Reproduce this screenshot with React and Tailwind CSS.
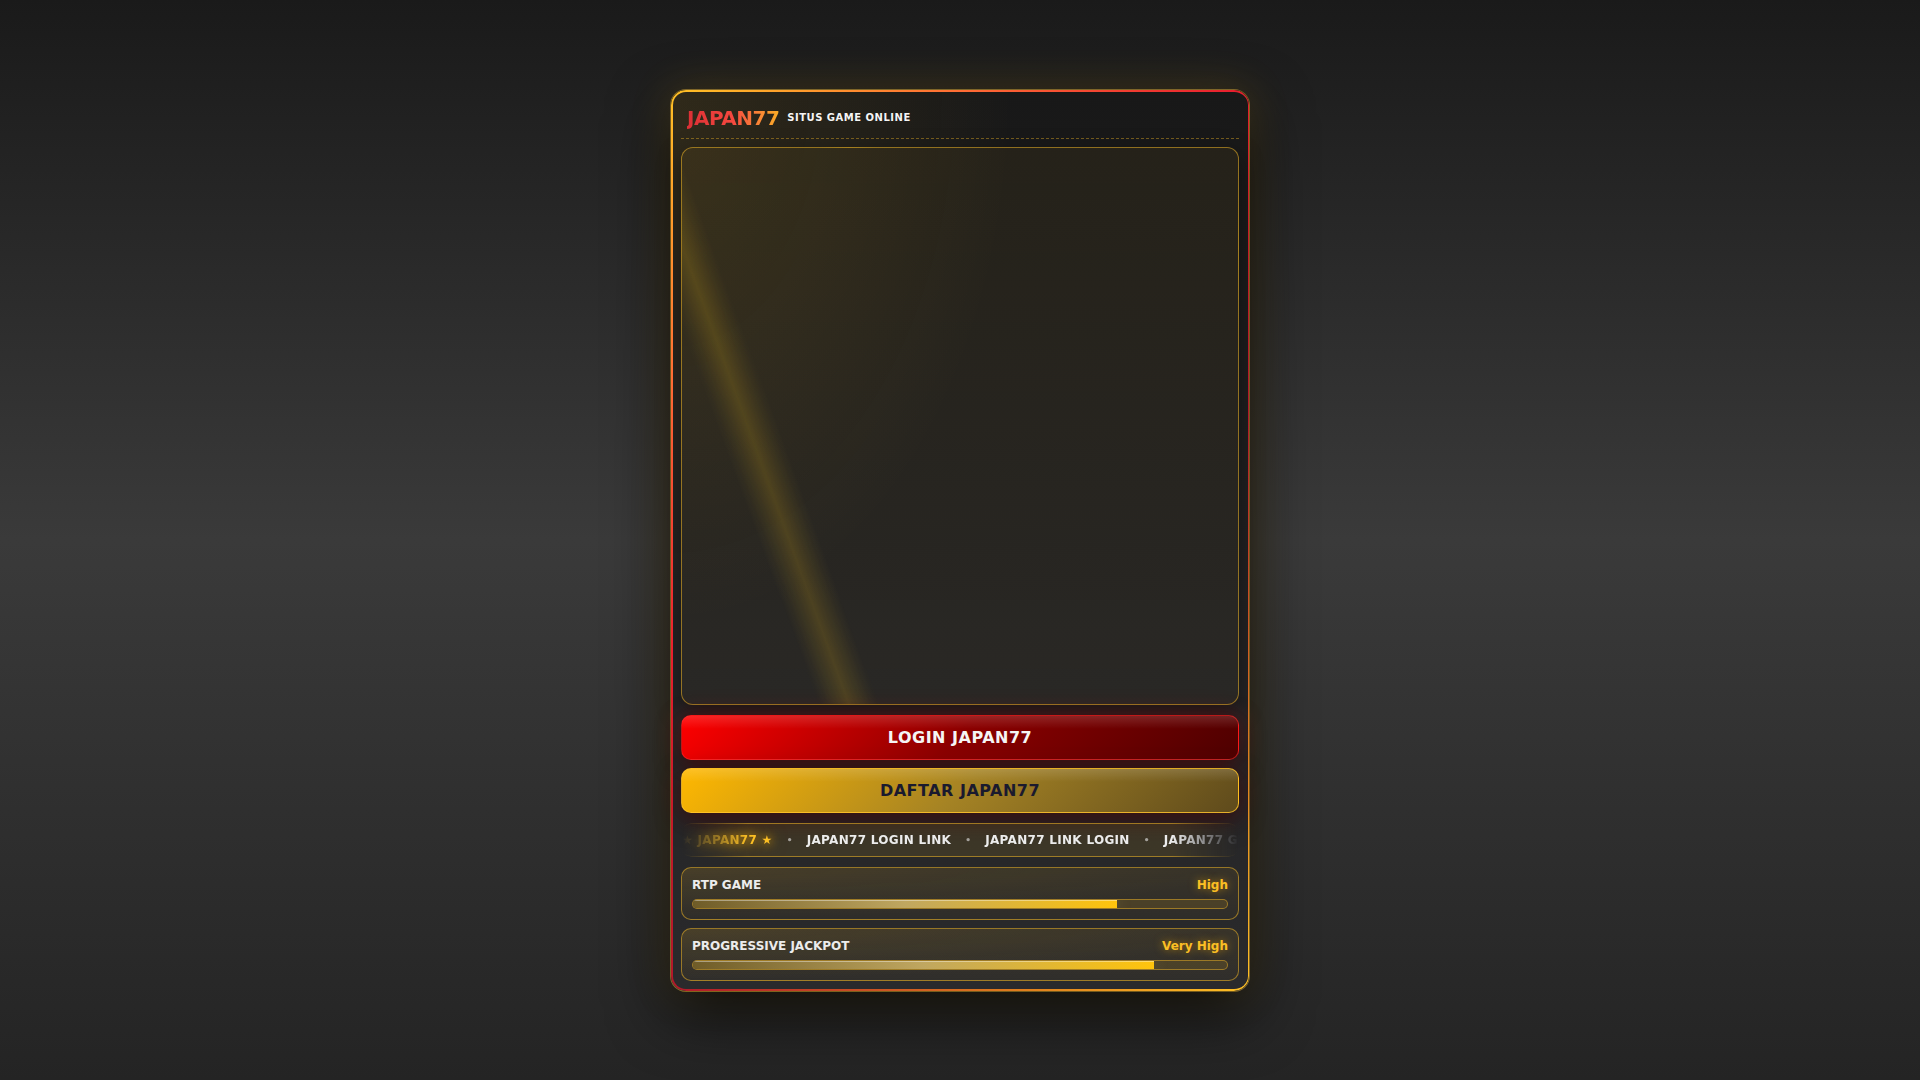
const promos = [
    { id: 1, label: 'JAPAN77 LOGIN LINK' },
    { id: 2, label: 'JAPAN77 LINK LOGIN' },
    { id: 3, label: 'JAPAN77 GAME ONLINE' },
]

const stats = [
    { id: 'rtp', title: 'RTP GAME', level: 'High', value: 79.4 },
    { id: 'jackpot', title: 'PROGRESSIVE JACKPOT', level: 'Very High', value: 86.3 },
]

function Header() {
    return (
        <header className="flex h-[39px] items-center gap-2 border-b border-dashed border-[#ffc125]/40 px-[6px] pb-[2px]">
            <h1 className="bg-linear-to-r from-[#dc2f35] via-[#f5483f] to-[#f9ab24] bg-clip-text text-xl leading-6 font-bold tracking-tight text-transparent">
                JAPAN77
            </h1>
            <p className="text-[10px] leading-4 font-bold tracking-wider text-[#f5f5f5]">SITUS GAME ONLINE</p>
        </header>
    )
}

function Ticker() {
    return (
        <div className="mt-[10px] flex h-[34px] items-center overflow-hidden rounded-[10px] border-y border-[#ffc125]/50 bg-[#ffc125]/10 text-xs font-bold tracking-wide whitespace-nowrap text-[#ececec] [mask-image:linear-gradient(90deg,transparent,#000_12%,#000_88%,transparent)]">
            <div className="flex items-center gap-[14px] pl-px">
                <span className="text-[#fbbf24] [text-shadow:0_0_10px_#ffb300,0_0_18px_#ffb300a6]">★ JAPAN77 ★</span>
                {promos.map((promo) => (
                    <div key={promo.id} className="flex items-center gap-[14px]">
                        <span className="text-[9px] leading-3 opacity-60">•</span>
                        <span>{promo.label}</span>
                    </div>
                ))}
            </div>
        </div>
    )
}

function StatCard({ stat }) {
    return (
        <section className="rounded-[10px] border border-[#ffc125]/50 bg-[radial-gradient(ellipse_at_top_left,#ffc12514,transparent_70%),linear-gradient(180deg,#ffc12514,#ffc12508)] p-[10px]">
            <div className="flex justify-between text-xs leading-[15px] font-bold">
                <h2 className="text-[#ececec]">{stat.title}</h2>
                <span className="text-[#fbbf24] [text-shadow:0_0_8px_#ffb30099]">{stat.level}</span>
            </div>
            <div className="mt-[6px] h-[10px] overflow-hidden rounded-full border border-[#ffc125]/45 bg-[#ffc125]/12">
                <div
                    className="h-full bg-[linear-gradient(90deg,#6f5c28,#c0a760_50%,#ffc40c)] shadow-[0_0_16px_#ffe08040,inset_0_1px_0_#ffffff66]"
                    style={{ width: `${stat.value}%` }}
                />
            </div>
        </section>
    )
}

export default function App() {
    return (
        <div className="flex min-h-screen items-center justify-center bg-[linear-gradient(180deg,#1a1a1a,#3a3a3a_50%,#242424)] font-['DejaVu_Sans',sans-serif]">
            <main className="relative w-full max-w-[580px] rounded-2xl border border-[#ffc125]/40 bg-[radial-gradient(ellipse_at_top_left,#ffc1251a,transparent_42%),linear-gradient(180deg,#181818,#2a2a2c)] p-[10px] shadow-[0_20px_60px_#000000cc,0_0_40px_#ffc12533]">
                {/* Gradient frame */}
                <div className="pointer-events-none absolute inset-0 rounded-[15px] bg-[linear-gradient(135deg,#ffc125,#ff6b35_20%,#e8202e_38%,#c41a28_50%,#b0182a_61%,#e0801d_85%,#ffc125)] p-[2px] pr-px [mask:linear-gradient(#fff_0_0)_content-box_exclude,linear-gradient(#fff_0_0)]" />

                <Header />

                {/* Banner */}
                <div className="mt-2 aspect-square rounded-xl border border-[#ffc125]/50 bg-[linear-gradient(70deg,transparent_18%,#ffc81408_19%,#ffc8142b_22%,#ffc81408_25%,transparent_26%),linear-gradient(180deg,#ffc1250e,#ffc12506)] shadow-[0_8px_24px_#00000066]" />

                <div className="mt-[10px] flex flex-col gap-2">
                    <button className="h-[45px] rounded-[10px] border border-[#ff2a2a]/60 bg-[linear-gradient(180deg,#ffffff24,transparent_13px),linear-gradient(135deg,#ff0000,#8b0000_50%,#4d0000)] pt-px text-base font-bold tracking-[0.5px] text-[#f5f5f5] shadow-[0_0_24px_#ff000040,0_8px_24px_#00000080]">
                        LOGIN JAPAN77
                    </button>
                    <button className="h-[45px] rounded-[10px] border border-[#ffc125]/80 bg-[linear-gradient(180deg,#ffffff24,transparent_13px),linear-gradient(135deg,#ffb800,#a58324_50%,#5e4a1c)] pt-px text-base font-bold tracking-[0.5px] text-[#1a1a2e] shadow-[0_4px_24px_#ff000033,0_8px_24px_#00000080]">
                        DAFTAR JAPAN77
                    </button>
                </div>

                <Ticker />

                <div className="mt-[10px] flex flex-col gap-2">
                    {stats.map((stat) => (
                        <StatCard key={stat.id} stat={stat} />
                    ))}
                </div>
            </main>
        </div>
    )
}
